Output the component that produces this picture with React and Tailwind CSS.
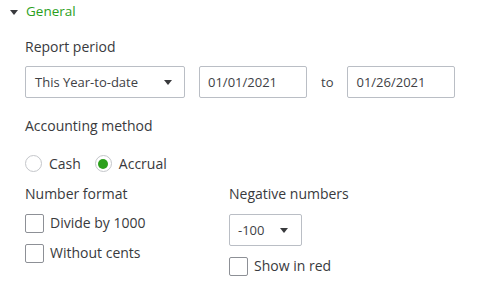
import React from 'react';

const Caret = ({ className = '' }) => (
  <svg width="8" height="5" viewBox="0 0 8 5" className={className}>
    <path d="M0 0 H8 L4 5 Z" fill="#393a3d" />
  </svg>
);

const Checkbox = ({ label }) => (
  <label className="flex items-center gap-[6px] h-[20px]">
    <span className="w-[19px] h-[19px] border border-[#8d9096] rounded-[2px] bg-white" />
    <span>{label}</span>
  </label>
);

const Radio = ({ label, checked }) => (
  <label className="flex items-center gap-[7px]">
    <span className="w-[17px] h-[17px] rounded-full border border-[#c4c6ca] bg-white flex items-center justify-center">
      {checked && <span className="w-[10px] h-[10px] rounded-full bg-[#2ca01c]" />}
    </span>
    <span>{label}</span>
  </label>
);

const App = () => {
  return (
    <div
      className="w-[483px] h-[298px] bg-white text-[#393a3d] text-[14px] leading-none"
      style={{ fontFamily: '"Open Sans", Arial, sans-serif' }}
    >
      <div className="flex items-center gap-[8px] pl-[10px] pt-[4px] h-[20px]">
        <Caret />
        <span className="text-[#2ca01c] text-[13.5px]">General</span>
      </div>

      <div className="pl-[25px]">
        <div className="mt-[20px]">Report period</div>

        <div className="flex items-center mt-[12px] text-[13px] text-[#404145]">
          <div className="w-[160px] h-[32px] border border-[#babec5] rounded-[2px] flex items-center justify-between pl-[9px] pr-[12px]">
            <span>This Year-to-date</span>
            <Caret />
          </div>
          <div className="ml-[14px] w-[108px] h-[32px] border border-[#babec5] rounded-[2px] flex items-center pl-[8px]">
            01/01/2021
          </div>
          <span className="ml-[14px] mr-[14px]">to</span>
          <div className="w-[108px] h-[32px] border border-[#babec5] rounded-[2px] flex items-center pl-[8px]">
            01/26/2021
          </div>
        </div>

        <div className="mt-[21px]">Accounting method</div>

        <div className="flex items-center gap-[14px] mt-[22px]">
          <Radio label="Cash" />
          <Radio label="Accrual" checked />
        </div>

        <div className="flex mt-[15px]">
          <div className="w-[204px]">
            <div>Number format</div>
            <div className="mt-[12px] flex flex-col gap-[10px]">
              <Checkbox label="Divide by 1000" />
              <Checkbox label="Without cents" />
            </div>
          </div>
          <div>
            <div>Negative numbers</div>
            <div className="mt-[13px] w-[73px] h-[32px] border border-[#babec5] rounded-[2px] flex items-center justify-between pl-[8px] pr-[13px] text-[13px] text-[#404145]">
              <span>-100</span>
              <Caret />
            </div>
            <div className="mt-[10px]">
              <Checkbox label="Show in red" />
            </div>
          </div>
        </div>
      </div>
    </div>
  );
};

export default App;
